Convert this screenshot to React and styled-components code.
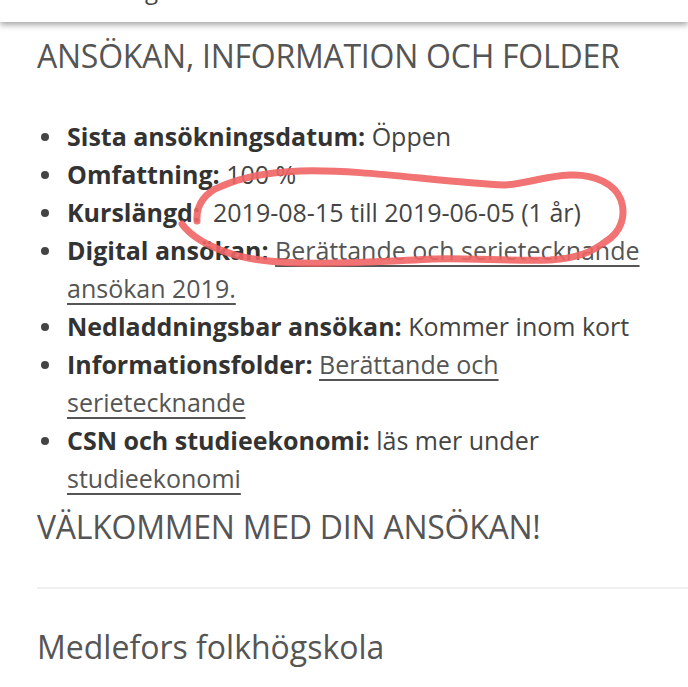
import React from "react";
import styled, { createGlobalStyle } from "styled-components";

const Global = createGlobalStyle`
  html, body { margin: 0; padding: 0; background: #fff; }
  body { font-family: "Open Sans", "Noto Sans", sans-serif; color: #555; overflow: hidden; }
`;

const Page = styled.div`
  position: relative;
  width: 688px;
  height: 687px;
  overflow: hidden;
  background: #fff;
`;

const TopBar = styled.header`
  height: 22px;
  background: #fff;
  box-shadow: 0 3px 6px rgba(0, 0, 0, 0.35);
  overflow: hidden;
  padding-left: 42px;
  position: relative;
  z-index: 2;
`;

const TopTitle = styled.span`
  display: block;
  font-size: 24px;
  line-height: 24px;
  margin-top: -22px;
  color: #444;
`;

const Content = styled.main`
  padding: 12px 0 0 37px;
`;

const Heading = styled.h2`
  margin: 0;
  font-size: 32px;
  line-height: 44px;
  font-weight: 500;
  color: #555;
  letter-spacing: -0.25px;
`;

const List = styled.ul`
  margin: 39px 0 0;
  padding: 0 20px 0 30px;
  list-style: none;
`;

const Item = styled.li`
  position: relative;
  font-size: 25px;
  line-height: 38px;
  color: #444;
  &::before {
    content: "";
    position: absolute;
    left: -26px;
    top: 16px;
    width: 8px;
    height: 8px;
    border-radius: 50%;
    background: #444;
  }
`;

const Label = styled.strong`
  font-weight: 700;
  color: #333;
`;

const Link = styled.a`
  color: #555;
  text-decoration: underline;
  text-decoration-thickness: 2px;
  text-underline-offset: 5px;
`;

const Welcome = styled(Heading)`
  margin-top: 8px;
`;

const Divider = styled.hr`
  border: none;
  border-top: 2px solid #eee;
  margin: 38px 0 0 0;
`;

const Footer = styled.h3`
  margin: 36px 0 0;
  font-size: 32px;
  line-height: 44px;
  font-weight: 500;
  color: #555;
`;

const Scribble = styled.svg`
  position: absolute;
  left: 0;
  top: 0;
  width: 688px;
  height: 687px;
  pointer-events: none;
  z-index: 3;
`;

export default function App() {
  return (
    <Page>
      <Global />
      <TopBar>
        <TopTitle>Utbildning</TopTitle>
      </TopBar>
      <Content>
        <Heading>ANSÖKAN, INFORMATION OCH FOLDER</Heading>
        <List>
          <Item><Label>Sista ansökningsdatum:</Label> Öppen</Item>
          <Item><Label>Omfattning:</Label> 100 %</Item>
          <Item><Label>Kurslängd:</Label>&nbsp; 2019-08-15 till 2019-06-05 (1 år)</Item>
          <Item><Label>Digital ansökan:</Label> <Link href="#">Berättande och serietecknande ansökan 2019.</Link></Item>
          <Item><Label>Nedladdningsbar ansökan:</Label> Kommer inom kort</Item>
          <Item><Label>Informationsfolder:</Label> <Link href="#">Berättande och serietecknande</Link></Item>
          <Item><Label>CSN och studieekonomi:</Label> läs mer under <Link href="#">studieekonomi</Link></Item>
        </List>
        <Welcome>VÄLKOMMEN MED DIN ANSÖKAN!</Welcome>
        <Divider />
        <Footer>Medlefors folkhögskola</Footer>
      </Content>
      <Scribble viewBox="0 0 688 687">
        <path
          d="M197,221 C196,205 205,192 222,186 C245,176 270,172 300,171 C340,170 380,174 420,178 C450,181 480,184 505,185 C525,184 545,176 570,175 C595,174 615,184 621,200 C626,215 622,232 605,242 C592,252 578,258 550,260 C510,261 470,258 433,259 C390,261 350,264 300,263 C270,262 250,260 232,254 C210,247 192,238 182,224"
          fill="none"
          stroke="#f06464"
          strokeOpacity="0.9"
          strokeWidth="7"
          strokeLinecap="round"
          strokeLinejoin="round"
        />
      </Scribble>
    </Page>
  );
}
